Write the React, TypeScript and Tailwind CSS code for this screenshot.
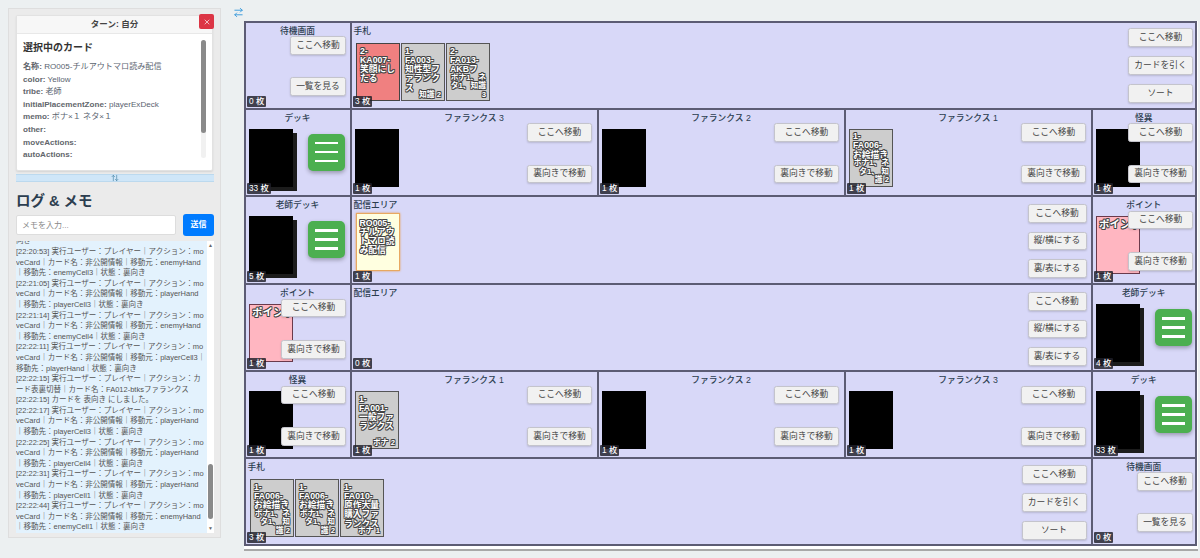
import React from "react";
import { ArrowRightLeft, ArrowUpDown, X } from "lucide-react";

const OUTLINE =
  "[text-shadow:0.75px_0_0_#444,-0.75px_0_0_#444,0_0.75px_0_#444,0_-0.75px_0_#444,0.75px_0.75px_0_#444,-0.75px_-0.75px_0_#444,0.75px_-0.75px_0_#444,-0.75px_0.75px_0_#444]";

function Btn({ label, w = "w-[65px]" }: { label: string; w?: string }) {
  return (
    <button className={`${w} h-[18.5px] shrink-0 rounded-[2.5px] border border-[#c4c4cc] bg-[#f1f1f1] text-[8.75px] leading-none text-[#444] shadow-[0_1px_2px_rgba(0,0,0,0.15)]`}>
      {label}
    </button>
  );
}

function Badge({ n }: { n: number }) {
  return (
    <span className="absolute bottom-[1px] left-[1.5px] z-30 rounded-[1px] bg-[rgba(30,30,40,0.82)] px-[2px] text-[8.25px] font-medium leading-[11px] text-white whitespace-nowrap">
      {n} 枚
    </span>
  );
}

function Back({ stack = false }: { stack?: boolean }) {
  return (
    <div className={`h-[58px] w-[44px] bg-black ${stack ? "shadow-[4px_4px_0_#1c1c1c]" : ""}`} />
  );
}

function Face({ text, sub, tone = "bg-[#cdcdcd] border-[#555]", pad = "pt-[2.5px]" }: { text: string; sub?: string; tone?: string; pad?: string }) {
  return (
    <div className={`relative h-[58px] w-[44px] shrink-0 overflow-hidden border-[1.5px] ${tone} px-[3px] ${pad} text-[8.75px] font-bold leading-[9.25px] text-white ${OUTLINE}`}>
      {text}
      {sub && <span className="absolute inset-x-[3px] bottom-[1px] text-right text-[7.75px] leading-[8.5px]">{sub}</span>}
    </div>
  );
}

function Title({ children, left = false }: { children: React.ReactNode; left?: boolean }) {
  return (
    <div className={`h-[16px] text-[8.75px] font-medium leading-[16px] text-[#2c3e50] ${left ? "text-left" : "text-center"}`}>
      {children}
    </div>
  );
}

function Cell({ children, count, span = "" }: { children: React.ReactNode; count: number; span?: string }) {
  return (
    <div className={`relative grid grid-cols-1 grid-rows-1 overflow-hidden border-r-[2px] border-b-[2px] border-[#5c5c74] bg-[#d8d8f8] ${span}`}>
      {children}
      <Badge n={count} />
    </div>
  );
}

function Buttons({ labels, gap, top, w, right }: { labels: string[]; gap: string; top: string; w?: string; right: string }) {
  return (
    <div className={`relative z-20 flex flex-col justify-self-end self-start [grid-area:1/1] ${gap} ${top} ${right}`}>
      {labels.map((l) => (
        <Btn key={l} label={l} w={w} />
      ))}
    </div>
  );
}

function Body({ children }: { children: React.ReactNode }) {
  return <div className="flex flex-col [grid-area:1/1]">{children}</div>;
}

const TWO = ["ここへ移動", "裏向きで移動"];

function Phalanx({ title, count, card }: { title: string; count: number; card?: React.ReactNode }) {
  return (
    <Cell count={count}>
      <Body>
        <Title>{title}</Title>
        <div className="ml-[3.5px] mt-[3px]">{card ?? <Back />}</div>
      </Body>
      <Buttons labels={TWO} gap="gap-[23px]" top="mt-[13.5px]" right="mr-[4.5px]" />
    </Cell>
  );
}

function Deck({ title, count }: { title: string; count: number }) {
  return (
    <Cell count={count}>
      <Body>
        <Title>{title}</Title>
        <div className="ml-[3.5px] mt-[3px] flex items-start gap-[15px]">
          <Back stack />
          <button className="mt-[5px] flex h-[37px] w-[37px] flex-col items-center justify-center gap-[6.5px] rounded-[5px] bg-[#4caf50] shadow-[0_2px_4px_rgba(0,0,0,0.3)]">
            <span className="h-[2.5px] w-[23px] bg-white" />
            <span className="h-[2.5px] w-[23px] bg-white" />
            <span className="h-[2.5px] w-[23px] bg-white" />
          </button>
        </div>
      </Body>
    </Cell>
  );
}

function Waiting({ count, right }: { count: number; right: string }) {
  return (
    <Cell count={count}>
      <Body>
        <Title>待機画面</Title>
      </Body>
      <Buttons labels={["ここへ移動", "一覧を見る"]} gap="gap-[22.5px]" top="mt-[13px]" w="w-[56px]" right={right} />
    </Cell>
  );
}

function Point({ hidden = false, right }: { hidden?: boolean; right: string }) {
  return (
    <Cell count={1}>
      <Body>
        <Title>{hidden ? "怪異" : "ポイント"}</Title>
        <div className="ml-[3.5px] mt-[3px]">
          {hidden ? (
            <Back />
          ) : (
            <div className={`h-[58px] w-[44px] overflow-hidden whitespace-nowrap border-[1.5px] border-[#6a3a4c] bg-[#ffb6c1] px-[2px] py-[1px] text-[10.5px] font-bold leading-[12px] text-white ${OUTLINE}`}>
              ポイント
            </div>
          )}
        </div>
      </Body>
      <Buttons labels={TWO} gap="gap-[23px]" top="mt-[13.5px]" right={right} />
    </Cell>
  );
}

function Stream({ count, card }: { count: number; card?: React.ReactNode }) {
  return (
    <Cell count={count} span="col-span-3">
      <Body>
        <div className="pl-[2px]"><Title left>配信エリア</Title></div>
        <div className="ml-[4px]">{card}</div>
      </Body>
      <Buttons labels={["ここへ移動", "縦/横にする", "裏/表にする"]} gap="gap-[9px]" top="mt-[7px]" w="w-[59px]" right="mr-[4px]" />
    </Cell>
  );
}

function Hand({ cards, right, top }: { cards: React.ReactNode; right: string; top: string }) {
  return (
    <Cell count={3} span="col-span-4">
      <Body>
        <div className="pl-[2px]"><Title left>手札</Title></div>
        <div className="ml-[4.5px] mt-[4px] flex gap-[1px]">{cards}</div>
      </Body>
      <Buttons labels={["ここへ移動", "カードを引く", "ソート"]} gap="gap-[9.5px]" top={top} right={right} />
    </Cell>
  );
}

const LOG = [
  "向き",
  "[22:20:53] 実行ユーザー：プレイヤー｜アクション：moveCard｜カード名：非公開情報｜移動元：enemyHand｜移動先：enemyCell3｜状態：裏向き",
  "[22:21:05] 実行ユーザー：プレイヤー｜アクション：moveCard｜カード名：非公開情報｜移動元：playerHand｜移動先：playerCell3｜状態：裏向き",
  "[22:21:14] 実行ユーザー：プレイヤー｜アクション：moveCard｜カード名：非公開情報｜移動元：enemyHand｜移動先：enemyCell4｜状態：裏向き",
  "[22:22:11] 実行ユーザー：プレイヤー｜アクション：moveCard｜カード名：非公開情報｜移動元：playerCell3｜移動先：playerHand｜状態：裏向き",
  "[22:22:15] 実行ユーザー：プレイヤー｜アクション：カード表裏切替｜カード名：FA012-btksファランクス",
  "[22:22:15] カードを 表向き にしました。",
  "[22:22:17] 実行ユーザー：プレイヤー｜アクション：moveCard｜カード名：非公開情報｜移動元：playerHand｜移動先：playerCell3｜状態：裏向き",
  "[22:22:25] 実行ユーザー：プレイヤー｜アクション：moveCard｜カード名：非公開情報｜移動元：playerHand｜移動先：playerCell4｜状態：裏向き",
  "[22:22:31] 実行ユーザー：プレイヤー｜アクション：moveCard｜カード名：非公開情報｜移動元：playerHand｜移動先：playerCell1｜状態：裏向き",
  "[22:22:44] 実行ユーザー：プレイヤー｜アクション：moveCard｜カード名：非公開情報｜移動元：enemyHand｜移動先：enemyCell1｜状態：裏向き",
];

const INFO: [string, string][] = [
  ["名称:", "RO005-チルアウトマロ読み配信"],
  ["color:", "Yellow"],
  ["tribe:", "老師"],
  ["initialPlacementZone:", "playerExDeck"],
  ["memo:", "ボナ×１ ネタ×１"],
  ["other:", ""],
  ["moveActions:", ""],
  ["autoActions:", ""],
];

function Sidebar() {
  return (
    <aside className="ml-[8px] mt-[8px] flex h-[530px] w-[213px] shrink-0 flex-col border border-[#dedede] bg-[#ebebeb] px-[7px] pt-[6px]">
      <section className="relative h-[156px] shrink-0 rounded-[2px] border border-[#e2e2e2] bg-white shadow-[0_1px_2px_rgba(0,0,0,0.1)]">
        <div className="h-[18px] border-b border-[#e8e8e8] bg-[#f7f7f7] text-center text-[8.5px] font-bold leading-[17px] text-[#444]">
          ターン: 自分
        </div>
        <button className="absolute -top-[2px] -right-[2px] flex h-[15px] w-[15px] items-center justify-center rounded-[2px] bg-[#dc3545] text-white">
          <X size={8} strokeWidth={2} />
        </button>
        <div className="flex">
          <div className="min-w-0 flex-1 pl-[6px] pt-[6px]">
            <h2 className="mb-[5px] text-[10px] font-bold leading-[16px] text-[#333]">選択中のカード</h2>
            {INFO.map(([k, v]) => (
              <p key={k} className="h-[12.6px] text-[8.1px] leading-[12.6px] text-[#5a6470] whitespace-nowrap">
                <b className="font-bold text-[#62666c]">{k}</b> {v}
              </p>
            ))}
          </div>
          <div className="mr-[6px] mt-[6px] flex h-[118px] w-[5px] flex-col rounded-full bg-[#f1f1f1]">
            <div className="h-[93px] rounded-full bg-[#8a8a8a]" />
          </div>
        </div>
      </section>
      <div className="mt-[3px] flex h-[8px] w-[198px] shrink-0 items-center justify-center border-y border-[#bcd9ee] bg-[#cfe6f8] text-[#4a87a8]">
        <ArrowUpDown size={8} strokeWidth={2} />
      </div>
      <h2 className="mt-[9px] text-[14.5px] font-bold leading-[20px] text-[#2c3e50]">ログ &amp; メモ</h2>
      <div className="mt-[3px] flex w-[198px] shrink-0 items-start gap-[7px]">
        <input
          readOnly
          placeholder="メモを入力..."
          className="mt-[1px] h-[20px] w-[160px] rounded-[2px] border border-[#ddd] bg-white px-[5px] text-[8px] text-[#333] outline-none placeholder:text-[#888]"
        />
        <button className="h-[22px] w-[31px] rounded-[3px] bg-[#007bff] text-[8px] font-bold text-white">送信</button>
      </div>
      <div className="mt-[5px] flex h-[292px] w-[198px] shrink-0">
        <div className="flex min-w-0 flex-1 flex-col justify-end overflow-hidden bg-[#e3f2fd] pr-[1px] text-[7.5px] leading-[10.6px] text-[#555] break-all">
          {LOG.map((l) => (
            <p key={l} className="shrink-0">{l}</p>
          ))}
        </div>
        <div className="flex w-[7px] shrink-0 flex-col items-center justify-between bg-white py-[2px]">
          <span className="text-[5px] leading-none text-[#666]">▲</span>
          <div className="mt-[208px] h-[55px] w-[5px] rounded-full bg-[#8a8a8a]" />
          <span className="text-[5px] leading-none text-[#666]">▼</span>
        </div>
      </div>
    </aside>
  );
}

const FA006 = "1-FA006-お絵描き";
const FA006_SUB = "ボナ1、ネタ1、 知識 2";

export default function App() {
  return (
    <div className="flex h-[558px] w-[1200px] overflow-hidden bg-[#ecf0f1] font-['Liberation_Sans','Noto_Sans_CJK_JP',sans-serif]">
      <Sidebar />
      <main className="ml-[12px] flex min-w-0 flex-1 flex-col pt-[7px]">
        <ArrowRightLeft size={11} strokeWidth={2} className="text-[#3498db]" />
        <div className="ml-[10.5px] mt-[3px] w-[954.5px] border-b-[2px] border-[#a8a8a8] bg-white pb-[3px] pr-[1px]">
          <div className="grid grid-cols-[106px_247px_247px_247px_104.5px] grid-rows-[86.5px_87.5px_88px_87px_87px_87px] border-t-[2px] border-l-[2px] border-[#5c5c74]">
            <Waiting count={0} right="mr-[3.5px]" />
            <Hand
              top="mt-[5px]"
              right="mr-[2px]"
              cards={
                <>
                  <Face text="2-KA007-笑顔にしたる" tone="bg-[#f08080] border-[#444]" />
                  <Face text="1-FA003-知性型ファランクス" sub="知識 2" />
                  <Face text="2-FA013-AKBファ" sub="ボナ1、ネタ1、知識 3" />
                </>
              }
            />

            <Deck title="デッキ" count={33} />
            <Phalanx title="ファランクス 3" count={1} />
            <Phalanx title="ファランクス 2" count={1} />
            <Phalanx title="ファランクス 1" count={1} card={<Face text={FA006} sub={FA006_SUB} />} />
            <Point hidden right="mr-[2px]" />

            <Deck title="老師デッキ" count={5} />
            <Stream
              count={1}
              card={<Face text="RO005-チルアウトマロ読み配信" pad="pt-[4.5px]" tone="bg-[#ffffe0] border-[#e8a860] shadow-[0_0_2px_#e8a050]" />}
            />
            <Point right="mr-[2px]" />

            <Point right="mr-[3.5px]" />
            <Stream count={0} />
            <Deck title="老師デッキ" count={4} />

            <Point hidden right="mr-[3.5px]" />
            <Phalanx title="ファランクス 1" count={1} card={<Face text="1-FA001-一般ファランクス" sub="ボナ 2" />} />
            <Phalanx title="ファランクス 2" count={1} />
            <Phalanx title="ファランクス 3" count={1} />
            <Deck title="デッキ" count={33} />

            <Hand
              top="mt-[6px]"
              right="mr-[4px]"
              cards={
                <>
                  <Face text={FA006} sub={FA006_SUB} />
                  <Face text={FA006} sub={FA006_SUB} />
                  <Face text="1-FA010-原作大量購入ファランクス" sub="ボナ 1" />
                </>
              }
            />
            <Waiting count={0} right="mr-[2px]" />
          </div>
        </div>
      </main>
    </div>
  );
}
